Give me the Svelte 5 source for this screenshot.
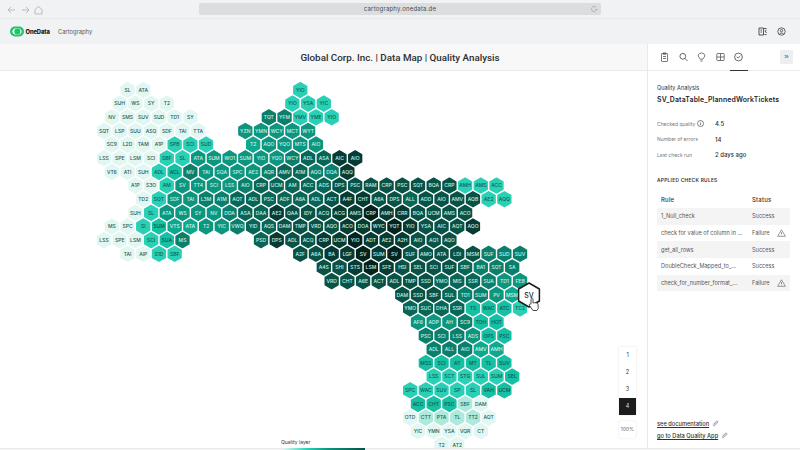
<script>
  // level -> hex fill / label colour
  const levels = {
    0: ['#e2f7f2', '#2a5a52'],
    1: ['#aee9dc', '#1c5f53'],
    2: ['#2ad0b5', '#0a5f50'],
    3: ['#17bfa4', '#075a4c'],
    4: ['#0fa78e', '#d3f5ec'],
    5: ['#0d967f', '#c8f0e6'],
    6: ['#0b7f6b', '#c8f0e6'],
    7: ['#096656', '#c8f0e6'],
    8: ['#085246', '#c8f0e6'],
    9: ['#063c33', '#c8f0e6'],
    A: ['#03231e', '#c8f0e6']
  };

  // each row: runs of [first half-column, names, level per name]
  const rows = [
    [[3, 'SL ATA', '00'], [25, 'YIO', '2']],
    [[2, 'SUH WS SY T2', '0000'], [24, 'YIO YSA YIC', '222']],
    [[1, 'NV SMS SUV SUD TD1 SY', '000000'], [21, 'TQT YFM YMV YME YIO', '66222']],
    [[0, 'SQT LSP SUU ASQ SDF TAI TTA', '0000000'], [18, 'YZN YMN WCY MCT WYT', '55555']],
    [[1, 'SC9 L2D TAM A1P SPB SCI SUD', '0000222'], [19, 'T2 AQO YQO MTS AIO', '45555']],
    [[0, 'LSS SPE LSM SCI SBF SL ATA SUM WO1 SUM YIO YQO WCY ADL ASA AIC AIO', '00002255555567799']],
    [[1, 'VT6 ATI SUH ADL ACL MV TAI SQA SPC AE2 AQR AMV A1M AQQ DQA AQQ', '0002365555677669']],
    [[4, 'A1P S3O AM SV TT4 SCI LSS AIO CRP UCM AM ACC ADS DPS PSC RAM CRP PSC SQT BQA CRP AMH AMS ACC', '002555567777788888888222']],
    [[5, 'TD2 SQT SDF TAI L3M A1M AQT ADL PSC ADF A6A ADL ACT A4F CHT A6A DPS ALL ADD AIO AMV AQB AE2 AQQ', '025566777777899887888822']],
    [[4, 'SUH SL ATA WS SY NV DDA ASA DAA AE2 QAA IDY ACQ ACG AMS CRP AMH CRR BQA UCM AMS ACO', '025555677988899A998888']],
    [[1, 'MS SPC SI SUM VTS ATA T2 YIC VWQ YID AQS DAM TMP VRD AQO ACO DOA WYC YQT YIO YSA AIC AQT AQO', '002344556778888999A98889']],
    [[0, 'LSS SPE LSM SCI SUA MS', '000236'], [20, 'PSD DPS ADL ACQ CRP UCM YIO ADT AE2 A2H AIO AQ1 AQO', '798899A999888']],
    [[3, 'TAI AIP S1D SBF', '0022'], [25, 'A2F A6A BA LGF SV SUM SV SUF AMO ATA LDI MSM SUF SUD SUV', '8899A9A88888666']],
    [[28, 'A4S SHI STS LSM SFE HSI SEL SCI SUF SBF BA1 SQT SA', '889A988887666']],
    [[29, 'VRD CHT A6E ACT ADL TMP SSD YMO MIS SSR SUA TD1 FEB', '8888888777655']],
    [[38, 'DAM SSD SBF SUL TD1 SUM PV MSM', '88876654']],
    [[39, 'YMO SUC DHA SSR TS WAC ATC TC2', '77773332']],
    [[40, 'AF6 ADP AH SC9 TOH HOT', '555633']],
    [[41, 'PSC SCI LSS ADS OPS PSC', '666533']],
    [[42, 'ADL ALL AIO AMV AMH', '66644']],
    [[41, 'MSS SCI AT MT TL SUV', '333333']],
    [[42, 'LSS SCT STG SUL SUM SEL', '222223']],
    [[39, 'SPC WAC SUV SP SL VAH UCM', '2222233']],
    [[40, 'ACC CHT PSC SBF DAM', '33310']],
    [[39, 'OTD CTT PTA TL TT2 AQT', '011110']],
    [[40, 'YIC YMN YSA VQR CT', '00000']],
    [[43, 'T2 AT2', '00']]
  ];

  const hexes = rows.flatMap((runs, r) =>
    runs.flatMap(([start, names, lv]) =>
      names.split(' ').map((name, i) => ({
        name,
        x: 104 + 7.85 * (start + i * 2),
        y: 90 + 13.65 * r,
        fill: levels[lv[i]][0],
        ink: levels[lv[i]][1]
      }))
    )
  );

  const hexPoints = '0,-7.4 6.4,-3.7 6.4,3.7 0,7.4 -6.4,3.7 -6.4,-3.7';
  const bigPoints = '0,-12 10.4,-6 10.4,6 0,12 -10.4,6 -10.4,-6';

  const stats = [
    { label: 'Checked quality', value: '4.5', info: true },
    { label: 'Number of errors', value: '14' },
    { label: 'Last check run', value: '2 days ago' }
  ];

  const checks = [
    { rule: '1_Null_check', status: 'Success' },
    { rule: 'check for value of column in ...', status: 'Failure', warn: true },
    { rule: 'get_all_rows', status: 'Success' },
    { rule: 'DoubleCheck_Mapped_to_...', status: 'Success' },
    { rule: 'check_for_number_format_...', status: 'Failure', warn: true }
  ];

  const links = ['see documentation', 'go to Data Quality App'];
</script>

<div class="page">
  <div class="browser">
    <div class="nav">
      <svg width="40" height="12" viewBox="0 0 40 12" fill="none" stroke="#b9bbbe" stroke-width="1">
        <path d="M8 6H1M4 3 1 6l3 3" />
        <path d="M15 6h7M19 3l3 3-3 3" />
        <path d="M28 5.500 31.500 2.500 35 5.500V10H28Z" />
      </svg>
    </div>
    <div class="url">
      <span>cartography.onedata.de</span>
      <svg class="reload" width="8" height="8" viewBox="0 0 8 8" fill="none" stroke="#a9abae" stroke-width=".8">
        <path d="M6 2.200A2.600 2.600 0 1 0 6 5.800" /><path d="M5 4h2.600L6.300 5.500Z" fill="#a9abae" stroke="none" />
      </svg>
    </div>
  </div>

  <header class="appbar">
    <div class="logo">
      <svg width="14" height="11" viewBox="0 0 14 11">
        <rect x="0" y="0.500" width="14" height="10" rx="5" fill="#1fc46a" />
        <ellipse cx="7" cy="5.500" rx="4.600" ry="3.600" fill="#fff" />
        <ellipse cx="7.300" cy="5.500" rx="3" ry="3.300" fill="#1fc46a" />
      </svg>
      <b>OneData</b>
    </div>
    <span class="crumb">Cartography</span>
    <div class="appicons">
      <svg width="9" height="9" viewBox="0 0 9 9" fill="none" stroke="#444" stroke-width=".9">
        <path d="M1 1h4.500v7H1ZM2.500 3h1.500M2.500 5h1.500M6 1.500h2.500M7 4l1.500-1M7 4l1.500 2M6.500 7.500h2" />
      </svg>
      <svg width="9" height="9" viewBox="0 0 9 9" fill="none" stroke="#444" stroke-width=".8">
        <circle cx="4.500" cy="4.500" r="3.700" /><circle cx="4.500" cy="3.600" r="1.200" /><path d="M2.300 7c.5-1.200 3.900-1.200 4.400 0" />
      </svg>
    </div>
  </header>

  <div class="layout">
    <main class="canvas">
      <div class="titlebar">Global Corp. Inc. | Data Map | Quality Analysis</div>
      <svg class="map" viewBox="0 71 647 377" width="647" height="377">
        {#each hexes as h}
          <g transform="translate({h.x} {h.y})">
            <polygon points={hexPoints} fill={h.fill} stroke={h.fill} stroke-width="1.500" stroke-linejoin="round" />
            <text class="hexlabel" y="1.800" fill={h.ink}>{h.name}</text>
          </g>
        {/each}
        <g transform="translate(529 295)">
          <polygon points={bigPoints} fill="#fff" stroke="#15201e" stroke-width="1.500" stroke-linejoin="round" />
          <text class="hexbig" y="2.500">SV</text>
        </g>
        <path
          d="M531 299.500c0-1.400 2-1.400 2 0v3.500c1.500-.6 4.800-.3 5 1l.3 4.200-1.300 2.300h-4l-3.500-5c-.8-1.200.8-2.200 1.500-1.200Z"
          fill="#fff" stroke="#222" stroke-width=".8" stroke-linejoin="round"
        />
      </svg>

      <div class="zoomer">
        <div class="steps">
          <span>1</span><span>2</span><span>3</span><span class="on">4</span>
        </div>
        <div class="pct">100%</div>
      </div>
    </main>

    <aside class="panel">
      <nav class="tabs">
        <svg width="9" height="10" viewBox="0 0 9 10" fill="none" stroke="#555" stroke-width=".8">
          <rect x="1.500" y="1.500" width="6" height="8" rx=".6" /><path d="M3 1h3v1.200H3ZM3 4.500h3M3 6.500h3" />
        </svg>
        <svg width="9" height="10" viewBox="0 0 9 10" fill="none" stroke="#555" stroke-width=".9">
          <circle cx="3.800" cy="4.300" r="2.900" /><path d="m6 6.500 2.500 2.500" />
        </svg>
        <svg width="9" height="10" viewBox="0 0 9 10" fill="none" stroke="#555" stroke-width=".8">
          <path d="M4.500 1C7 1 8 3 7.800 4c-.2 1.200-1.800 1.800-2 3.200H3.200C3 5.800 1.400 5.200 1.200 4 1 3 2 1 4.500 1ZM3.300 9h2.400" />
        </svg>
        <svg width="9" height="10" viewBox="0 0 9 10" fill="none" stroke="#555" stroke-width=".8">
          <rect x=".8" y="1.500" width="7.400" height="7" rx=".8" /><path d="M.8 5h7.400M4.500 1.500v7" />
        </svg>
        <svg width="9" height="10" viewBox="0 0 9 10" fill="none" stroke="#444" stroke-width=".8">
          <circle cx="4.500" cy="5" r="3.900" /><path d="m2.700 4.800 1.400 1.300 2.300-2.200" />
        </svg>
        <button class="collapse">»</button>
      </nav>

      <div class="body">
        <div class="kicker">Quality Analysis</div>
        <h2>SV_DataTable_PlannedWorkTickets</h2>

        <dl class="stats">
          {#each stats as s}
            <div class="stat">
              <dt>
                {s.label}
                {#if s.info}
                  <svg width="7" height="7" viewBox="0 0 7 7" fill="none" stroke="#333" stroke-width=".6">
                    <circle cx="3.500" cy="3.500" r="3" /><path d="M3.500 3v2M3.500 1.800v.6" />
                  </svg>
                {/if}
              </dt>
              <dd>{s.value}</dd>
            </div>
          {/each}
        </dl>

        <h3>APPLIED CHECK RULES</h3>
        <div class="table">
          <div class="row head"><span class="rule">Rule</span><span>Status</span></div>
          {#each checks as c}
            <div class="row item">
              <span class="rule">{c.rule}</span>
              <span>{c.status}</span>
              {#if c.warn}
                <svg class="warn" width="9" height="8" viewBox="0 0 9 8" fill="none" stroke="#555" stroke-width=".6">
                  <path d="M4.500.8 8.400 7.300H.6ZM4.500 3v2.200M4.500 5.800v.6" />
                </svg>
              {/if}
            </div>
          {/each}
        </div>

        <div class="links">
          {#each links as l}
            <div class="link">
              <a href="#top">{l}</a>
              <svg width="7" height="7" viewBox="0 0 7 7" fill="none" stroke="#666" stroke-width=".6">
                <path d="M1.500 4.200 4.300 1.400c1-1 2.300.3 1.300 1.300L2.600 5.700c-.6.600-1.500-.3-.9-.9L4.300 2.200" />
              </svg>
            </div>
          {/each}
        </div>
      </div>
    </aside>

    <div class="legend">
      <span>Quality layer</span>
      <div class="ramp"></div>
    </div>
  </div>
  <div class="foot"></div>
</div>

<style>
  :global(body) {
    margin: 0;
    background: #fff;
    font-family: "Inter", "Liberation Sans", sans-serif;
  }

  .page {
    width: 800px;
    height: 450px;
    display: flex;
    flex-direction: column;
    overflow: hidden;
    color: #2a2c2e;
  }

  .browser {
    height: 19px;
    box-sizing: border-box;
    padding: 3px 0 1px 7px;
    display: flex;
    background: #f1f2f3;
    border-bottom: 1px solid #e8e9ea;
  }

  .nav {
    width: 192px;
    display: flex;
    align-items: center;
  }

  .url {
    width: 402px;
    height: 12px;
    position: relative;
    border-radius: 2px;
    background: #dcddde;
    font-size: 6px;
    line-height: 12px;
    text-align: center;
    letter-spacing: .2px;
    color: #4a4c4e;
  }

  .reload {
    position: absolute;
    right: 3px;
    top: 2px;
  }

  .appbar {
    height: 25px;
    box-sizing: border-box;
    padding: 0 14px 0 10px;
    display: flex;
    align-items: center;
    background: #f1f2f3;
  }

  .logo {
    width: 48px;
    display: flex;
    align-items: center;
    gap: 1.500px;
  }

  .logo b {
    font-size: 5.800px;
    font-weight: 800;
    letter-spacing: -.1px;
    color: #111;
  }

  .crumb {
    font-size: 5.800px;
    color: #55585a;
  }

  .appicons {
    margin-left: auto;
    display: flex;
    gap: 10px;
  }

  .layout {
    flex: 1;
    min-height: 0;
    display: flex;
    position: relative;
  }

  .canvas {
    flex: 1;
    position: relative;
    min-width: 0;
    overflow: hidden;
  }

  .titlebar {
    height: 27px;
    box-sizing: border-box;
    padding-left: 153px;
    background: #f8f8f9;
    border-bottom: 1px solid #ebebec;
    font-family: "Roboto", "Liberation Sans", sans-serif;
    font-size: 9.800px;
    font-weight: 500;
    line-height: 27px;
    text-align: center;
    color: #2b2d2f;
  }

  .map {
    display: block;
  }

  .hexlabel {
    font-size: 5px;
    font-weight: 500;
    text-anchor: middle;
  }

  .hexbig {
    font-size: 7px;
    font-weight: 500;
    text-anchor: middle;
    fill: #1a1c1c;
  }

  .zoomer {
    position: absolute;
    left: 619px;
    top: 303px;
    width: 17px;
    display: flex;
    flex-direction: column;
    gap: 6px;
    font-size: 5.500px;
    color: #333;
    text-align: center;
  }

  .steps {
    background: #fff;
    box-shadow: 0 0 2px rgba(0, 0, 0, .12);
  }

  .steps span {
    display: block;
    height: 17px;
    line-height: 17px;
  }

  .steps .on {
    background: #1c1c1c;
    color: #ddd;
  }

  .pct {
    height: 17px;
    line-height: 17px;
    font-size: 5px;
    color: #666;
    background: #fff;
    border-radius: 2px;
    box-shadow: 0 0 2px rgba(0, 0, 0, .14);
  }

  .panel {
    width: 153px;
    flex: none;
    display: flex;
    flex-direction: column;
    background: #fff;
    border-left: 1px solid #e9e9ea;
    box-sizing: border-box;
  }

  .tabs {
    height: 27px;
    box-sizing: border-box;
    padding: 0 7px 0 12px;
    display: flex;
    align-items: center;
    gap: 9.500px;
    border-bottom: 1px solid #ebebec;
    position: relative;
  }

  .tabs::after {
    content: "";
    position: absolute;
    left: 82px;
    bottom: -1px;
    width: 18px;
    height: 1px;
    background: #333;
  }

  .collapse {
    margin-left: auto;
    width: 13px;
    height: 14px;
    padding: 0;
    border: none;
    border-radius: 1px;
    background: #eeeeef;
    font-size: 8px;
    line-height: 12px;
    color: #555;
  }

  .body {
    flex: 1;
    display: flex;
    flex-direction: column;
    padding: 13px 10px 8px 9px;
    min-height: 0;
  }

  .kicker {
    font-size: 5.600px;
    line-height: 8px;
    color: #333;
  }

  h2 {
    margin: 3px 0 0;
    font-size: 6.900px;
    line-height: 10px;
    font-weight: 600;
    letter-spacing: .15px;
    white-space: nowrap;
    color: #24262a;
  }

  .stats {
    margin: 11px 0 0;
  }

  .stat {
    height: 15.500px;
    display: flex;
    align-items: center;
  }

  dt {
    width: 58px;
    display: flex;
    align-items: center;
    gap: 2px;
    font-size: 5px;
    color: #777;
  }

  dd {
    margin: 0;
    font-size: 6px;
    font-weight: 500;
    color: #333;
  }

  h3 {
    margin: 13px 0 0;
    font-size: 4.800px;
    line-height: 8px;
    font-weight: 600;
    letter-spacing: .3px;
    color: #333;
  }

  .table {
    margin-top: 7px;
  }

  .row {
    height: 16.700px;
    padding-left: 4px;
    display: flex;
    align-items: center;
    font-size: 5.600px;
    color: #55585a;
    position: relative;
  }

  .row .rule {
    width: 91px;
    white-space: nowrap;
  }

  .head {
    height: 17.500px;
    font-weight: 500;
    font-size: 6px;
    letter-spacing: .2px;
    color: #333;
  }

  .item:nth-child(even) {
    background: #f4f4f5;
  }

  .warn {
    position: absolute;
    right: 4px;
    top: 4px;
  }

  .links {
    margin-top: auto;
    display: flex;
    flex-direction: column;
    gap: 3px;
  }

  .link {
    display: flex;
    align-items: center;
    gap: 3px;
    height: 9px;
  }

  .link a {
    font-size: 5.700px;
    font-weight: 500;
    color: #333;
    text-decoration: underline;
  }

  .legend {
    position: absolute;
    left: 281px;
    bottom: -2px;
    width: 84px;
    font-size: 5px;
    line-height: 7px;
    color: #333;
  }

  .ramp {
    height: 2px;
    margin: 2px 0 0 2px;
    background: linear-gradient(90deg, #e2f7f2, #2ad0b5 30%, #0d967f 55%, #085246);
  }

  .foot {
    height: 2px;
    background: #f4f4f5;
    border-top: 1px solid #ebebec;
    box-sizing: border-box;
  }
</style>
